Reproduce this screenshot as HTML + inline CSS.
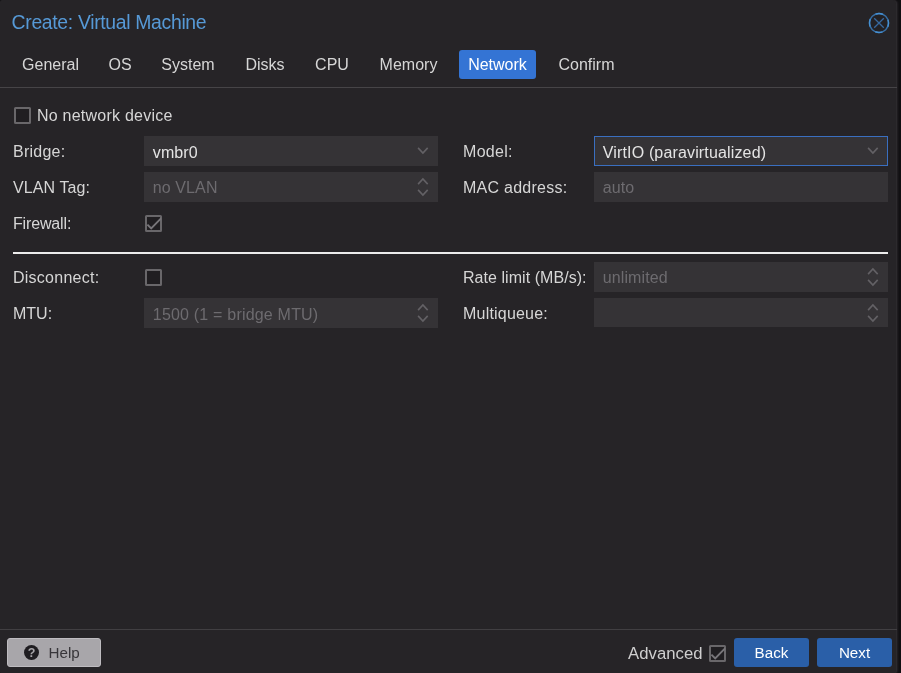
<!DOCTYPE html>
<html><head><meta charset="utf-8">
<style>
html,body{margin:0;padding:0;}
body{width:901px;height:673px;background:#111012;overflow:hidden;position:relative;font-family:"Liberation Sans",sans-serif;}
#win{will-change:transform;position:absolute;left:0;top:0;width:897px;height:674px;background:#262427;border-radius:2px 4px 4px 2px;box-sizing:border-box;border-right:1px solid #2c2a2d;box-shadow:1px 0 0 #1e1c1f,2px 0 0 #161417;}
.abs{position:absolute;white-space:nowrap;}
#title{left:11.6px;top:11px;font-size:19.4px;line-height:22px;color:#5699d6;letter-spacing:-0.33px;}
.tab{top:50px;height:29px;line-height:29px;font-size:16px;color:#d6d6d6;border-radius:3px;text-align:center;}
.tab.act{background:#3474d4;color:#fff;}
.hline{left:0;width:897px;height:1px;background:#464447;}
.lbl{font-size:16px;line-height:20px;color:#d6d6d6;letter-spacing:0.25px;}
.fld{height:30px;background:#353336;box-sizing:border-box;font-size:16px;line-height:33px;color:#e4e4e4;padding-left:8.8px;width:294px;letter-spacing:0.1px;}
.fld.ph{color:#6d6b6f;line-height:31px;}
.fld.ph2{color:#6d6b6f;letter-spacing:0.2px}
.cb{width:17px;height:17px;box-sizing:border-box;border:2px solid #69676a;border-radius:1.5px;background:#201e21;}
.btn{top:638px;height:29px;line-height:30px;font-size:15.2px;border-radius:3px;text-align:center;}
.btn.blue{background:#2a5fa8;color:#fff;}
</style></head><body>
<div id="win">
<div id="title" class="abs">Create: Virtual Machine</div>
<svg class="abs" style="left:867px;top:11px" width="24" height="24" viewBox="0 0 24 24"><circle cx="12" cy="12" r="9.5" fill="#232124" stroke="#376fa6" stroke-width="1.45"/><circle cx="12" cy="12" r="9.5" fill="none" stroke="#4690d2" stroke-width="1.45" stroke-dasharray="7.5 7.42" stroke-dashoffset="3.75"/><path d="M7.2 7.2L16.8 16.8M16.8 7.2L7.2 16.8" stroke="#36689f" stroke-width="1.3" fill="none"/></svg>

<div class="abs tab" style="left:13px;width:75px">General</div>
<div class="abs tab" style="left:100px;width:40px">OS</div>
<div class="abs tab" style="left:152px;width:72px">System</div>
<div class="abs tab" style="left:236px;width:58px">Disks</div>
<div class="abs tab" style="left:306px;width:52px">CPU</div>
<div class="abs tab" style="left:370px;width:77px">Memory</div>
<div class="abs tab act" style="left:459px;width:77px">Network</div>
<div class="abs tab" style="left:549px;width:75px">Confirm</div>
<div class="abs hline" style="top:87px"></div>

<div class="abs cb" style="left:14px;top:107px"></div>
<div class="abs lbl" style="left:37px;top:106px;letter-spacing:0.23px">No network device</div>

<div class="abs lbl" style="left:13px;top:142px">Bridge:</div>
<div class="abs fld" style="left:144px;top:136px">vmbr0</div><svg class="abs" style="left:417px;top:147px" width="12" height="8" viewBox="0 0 12 8"><path d="M1.1 0.9L5.9 6.1L10.7 0.9" fill="none" stroke="#636165" stroke-width="1.6"/></svg>
<div class="abs lbl" style="left:13px;top:178px;letter-spacing:0.1px">VLAN Tag:</div>
<div class="abs fld ph" style="left:144px;top:172px">no VLAN</div><svg class="abs" style="left:417px;top:177px" width="12" height="8" viewBox="0 0 12 8"><path d="M1.1 7.1L5.9 1.9L10.7 7.1" fill="none" stroke="#636165" stroke-width="1.6"/></svg><svg class="abs" style="left:417px;top:189px" width="12" height="8" viewBox="0 0 12 8"><path d="M1.1 0.9L5.9 6.1L10.7 0.9" fill="none" stroke="#636165" stroke-width="1.6"/></svg>
<div class="abs lbl" style="left:13px;top:214px;letter-spacing:-0.15px">Firewall:</div>
<div class="abs cb" style="left:145px;top:215px"></div><svg class="abs" style="left:145px;top:215px" width="18" height="18" viewBox="0 0 18 18"><path d="M2.4 9.6L6.2 13.4L16 3.4" fill="none" stroke="#78767a" stroke-width="1.9"/></svg>

<div class="abs lbl" style="left:463px;top:142px;letter-spacing:0.3px">Model:</div>
<div class="abs fld" style="left:594px;top:136px;border:1px solid #3a6fc0;padding-left:7.8px;line-height:31px;letter-spacing:0.15px">VirtIO (paravirtualized)</div><svg class="abs" style="left:867px;top:147px" width="12" height="8" viewBox="0 0 12 8"><path d="M1.1 0.9L5.9 6.1L10.7 0.9" fill="none" stroke="#636165" stroke-width="1.6"/></svg>
<div class="abs lbl" style="left:463px;top:178px">MAC address:</div>
<div class="abs fld ph" style="left:594px;top:172px">auto</div>

<div class="abs" style="left:13px;top:252px;width:875px;height:2px;background:#ececec"></div>

<div class="abs lbl" style="left:13px;top:268px">Disconnect:</div>
<div class="abs cb" style="left:145px;top:269px"></div>
<div class="abs lbl" style="left:13px;top:304px;letter-spacing:0px">MTU:</div>
<div class="abs fld ph2" style="left:144px;top:298px">1500 (1 = bridge MTU)</div><svg class="abs" style="left:417px;top:303px" width="12" height="8" viewBox="0 0 12 8"><path d="M1.1 7.1L5.9 1.9L10.7 7.1" fill="none" stroke="#636165" stroke-width="1.6"/></svg><svg class="abs" style="left:417px;top:315px" width="12" height="8" viewBox="0 0 12 8"><path d="M1.1 0.9L5.9 6.1L10.7 0.9" fill="none" stroke="#636165" stroke-width="1.6"/></svg>

<div class="abs lbl" style="left:463px;top:268px;letter-spacing:0.05px">Rate limit (MB/s):</div>
<div class="abs fld ph" style="left:594px;top:262px">unlimited</div><svg class="abs" style="left:867px;top:267px" width="12" height="8" viewBox="0 0 12 8"><path d="M1.1 7.1L5.9 1.9L10.7 7.1" fill="none" stroke="#636165" stroke-width="1.6"/></svg><svg class="abs" style="left:867px;top:279px" width="12" height="8" viewBox="0 0 12 8"><path d="M1.1 0.9L5.9 6.1L10.7 0.9" fill="none" stroke="#636165" stroke-width="1.6"/></svg>
<div class="abs lbl" style="left:463px;top:304px;letter-spacing:0.2px">Multiqueue:</div>
<div class="abs fld ph" style="left:594px;top:298px;height:29px"></div><svg class="abs" style="left:867px;top:303px" width="12" height="8" viewBox="0 0 12 8"><path d="M1.1 7.1L5.9 1.9L10.7 7.1" fill="none" stroke="#636165" stroke-width="1.6"/></svg><svg class="abs" style="left:867px;top:315px" width="12" height="8" viewBox="0 0 12 8"><path d="M1.1 0.9L5.9 6.1L10.7 0.9" fill="none" stroke="#636165" stroke-width="1.6"/></svg>

<div class="abs hline" style="top:629px;background:#413f42"></div>
<div class="abs btn" style="left:7px;width:94px;background:#a8a6aa;color:#38363a;box-sizing:border-box;border:1px solid #bebcc0;line-height:28px;text-align:left;padding-left:40.5px">Help</div>
<svg class="abs" style="left:23px;top:644px" width="17" height="17" viewBox="0 0 17 17"><circle cx="8.5" cy="8.5" r="7.5" fill="#1f1d21"/><text x="8.5" y="13" text-anchor="middle" font-family="Liberation Sans, sans-serif" font-weight="bold" font-size="12.5" fill="#a8a6aa">?</text></svg>
<div class="abs lbl" style="left:628px;top:644px;letter-spacing:0.05px;font-size:16.7px;color:#cfcfcf">Advanced</div>
<div class="abs cb" style="left:709px;top:645px"></div><svg class="abs" style="left:709px;top:645px" width="18" height="18" viewBox="0 0 18 18"><path d="M2.4 9.6L6.2 13.4L16 3.4" fill="none" stroke="#78767a" stroke-width="1.9"/></svg>
<div class="abs btn blue" style="left:734px;width:75px">Back</div>
<div class="abs btn blue" style="left:817px;width:75px">Next</div>
</div>
</body></html>
